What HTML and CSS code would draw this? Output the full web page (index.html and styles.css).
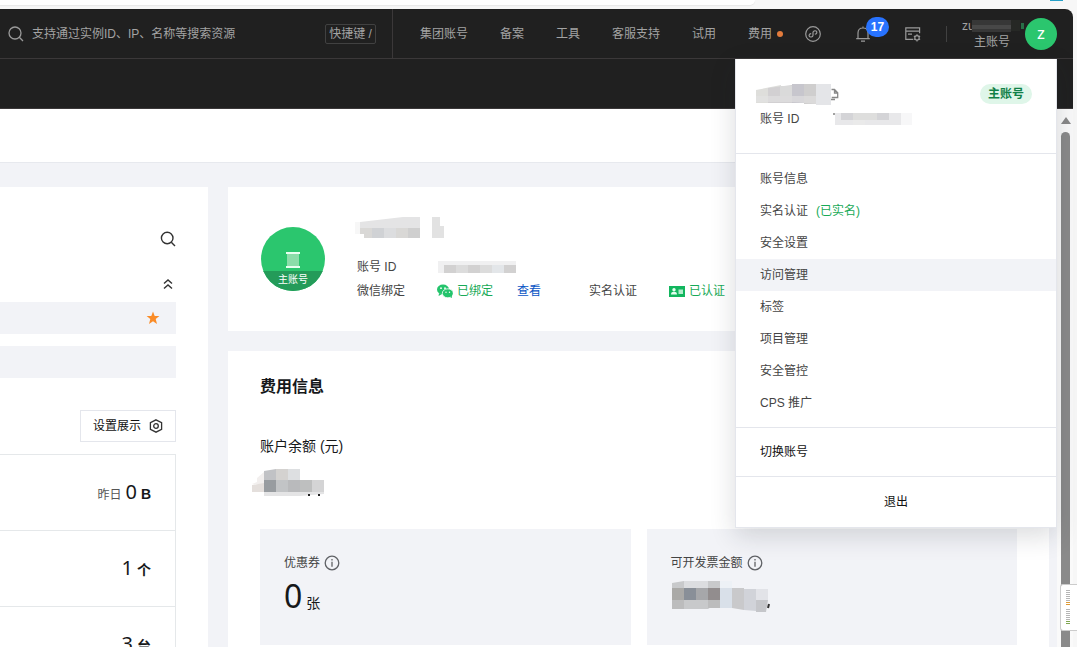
FILE: index.html
```html
<!DOCTYPE html>
<html lang="zh-CN">
<head>
<meta charset="utf-8">
<title>账号信息</title>
<link rel="stylesheet" href="styles.css">
</head>
<body>
<div class="window">
  <div class="tabstrip"><div class="omnibox"></div><div class="extension"></div></div>
  <div class="app">
    <header class="header">
      <div class="search">
        <svg class="icon" viewBox="0 0 16 16" fill="none" stroke="#9a9a9a" stroke-width="1.3"><circle cx="7" cy="7" r="6"/><path d="M11.3 11.3 15 15"/></svg>
        <input class="search-input" type="text" aria-label="搜索资源" placeholder="支持通过实例ID、IP、名称等搜索资源">
        <kbd class="shortcut">快捷键 /</kbd>
      </div>
      <nav class="nav">
        <a href="#">集团账号</a>
        <a href="#">备案</a>
        <a href="#">工具</a>
        <a href="#">客服支持</a>
        <a href="#">试用</a>
        <a href="#" class="fee">费用<i class="dot"></i></a>
      </nav>
      <div class="tools">
        <button class="tool" aria-label="小程序"><svg class="icon" viewBox="0 0 16 16" fill="none" stroke="#9a9a9a" stroke-width="1.2"><circle cx="8" cy="8" r="7.3"/><path d="M6.2 7.6C4.4 7.8 3.8 9 4.2 10c.6 1.5 3.6 1.3 3.8-.6V6.4c.2-1.9 3-2.2 3.7-.6.4 1.1-.2 2.2-1.9 2.4"/></svg></button>
        <button class="tool" aria-label="消息"><svg class="icon" viewBox="0 0 16 16" fill="none" stroke="#9a9a9a" stroke-width="1.2"><path d="M1.2 12.6h13.6M3 12.4V7c0-3 2-5 5-5s5 2 5 5v5.4M8 2V.6M6 15.1h4"/></svg><span class="count">17</span></button>
        <button class="tool" aria-label="控制台"><svg class="icon" viewBox="0 0 16 16" fill="none" stroke="#9a9a9a" stroke-width="1.2"><path d="M8.2 13.4H.8V1.8h13.8v5.4M.8 5.2h13.8M3 8.2h4"/><circle cx="12" cy="11.8" r="2.2"/><path d="M12 8.2v1.4M12 14v1.4M8.9 10l1.2.7M13.9 12.9l1.2.7M8.9 13.6l1.2-.7M13.9 10.7l1.2-.7"/></svg></button>
      </div>
      <div class="user">
        <div class="user-text">
          <span class="user-name">zu<svg class="user-mask" width="53" height="14" viewBox="0 0 53 14"><path d="M0 2h39v12H0z" fill="#373737"/><path d="M0 7h39v4H0z" fill="#484848"/><path d="M39 2h9v11h-9z" fill="#262825"/><path d="M49 5h3v6h-3z" fill="#286f47"/></svg></span>
          <span>主账号</span>
        </div>
        <div class="avatar">z</div>
      </div>
      <section class="menu">
        <div class="menu-head">
          <div class="menu-title">
            <svg width="83" height="22" viewBox="0 0 83 22"><path d="M75.5 5.500h3l3.200 3.200v4.800h-6M78.500 5.500v3.500h3M75 15.500h4" fill="none" stroke="#888" stroke-width="1.300"/><path d="M0 6 25 1v18L0 19z" fill="#dededb"/><path d="M12 4 36 1v18H12z" fill="#d2d0d2"/><path d="M24 2h12v10H24z" fill="#dadada"/><path d="M36 0h12v19H36z" fill="#c7c6cd"/><path d="M48 0h12v20H48z" fill="#cfcece"/><path d="M60 0h15v21H60z" fill="#e4e5e8"/><path d="M0 12h60v8L36 18H0z" fill="#e2e2e2" opacity=".6"/></svg>
            <span class="tag">主账号</span>
          </div>
          <div class="menu-id"><span>账号 ID</span><svg width="80" height="12" viewBox="0 0 80 12"><path d="M0 1h2" stroke="#444"/><path d="M2 0h66v12H2z" fill="#e8e8ea"/><path d="M8 0h12v7H8zM44 0h12v7H44z" fill="#d4d4d7"/><path d="M20 0h24v7H20z" fill="#dededd"/><path d="M20 7h12v5H20z" fill="#eaeaea"/><path d="M68 0h11v12H68z" fill="#f7f7f8"/></svg></div>
        </div>
        <div class="menu-list">
          <a href="#">账号信息</a>
          <a href="#">实名认证<span class="verified">(已实名)</span></a>
          <a href="#">安全设置</a>
          <a href="#" class="active">访问管理</a>
          <a href="#">标签</a>
          <a href="#">项目管理</a>
          <a href="#">安全管控</a>
          <a href="#">CPS 推广</a>
        </div>
        <button class="menu-switch">切换账号</button>
        <button class="menu-exit">退出</button>
      </section>
    </header>
    <div class="subbar"></div>
    <div class="viewport">
      <div class="page">
        <div class="titlebar"></div>
        <div class="columns">
          <aside class="side">
            <button class="plain" aria-label="搜索"><svg class="icon" viewBox="0 0 16 16" fill="none" stroke="#333" stroke-width="1.400"><circle cx="7.200" cy="7" r="5.800"/><path d="M11.300 11.200 15 15"/></svg></button>
            <button class="plain collapse" aria-label="收起"><svg class="icon" viewBox="0 0 16 16" fill="none" stroke="#333" stroke-width="1.400"><path d="M4 7.500 8 4l4 3.500M4 12.500 8 9l4 3.500"/></svg></button>
            <div class="bar"><svg width="14" height="14" viewBox="0 0 14 14"><path d="m7 .6 1.700 4.500h4.700L9.700 8l1.300 5L7 10.200 3 13l1.300-5L.6 5.100h4.700z" fill="#fa8c28"/></svg></div>
            <div class="bar"></div>
            <button class="settings">设置展示<svg width="14" height="14" viewBox="0 0 14 14" fill="none" stroke="#333" stroke-width="1.300"><path d="m7 .8 5.600 2.900v6.600L7 13.200l-5.600-2.900V3.700z"/><circle cx="7" cy="7" r="2.300"/></svg></button>
            <ul class="stats">
              <li><small>昨日</small><span>0</span><b>B</b></li>
              <li><span>1</span><b>个</b></li>
              <li><span>3</span><b>台</b></li>
            </ul>
          </aside>
          <main class="main">
            <section class="card account">
              <div class="portrait">
                <svg width="20" height="17" viewBox="0 0 20 17"><path d="M4 2h12v12H4z" fill="#8bdda9"/><path d="M3 1h14M3 15h14" stroke="#e8fff0" stroke-width="2"/></svg>
                <span>主账号</span>
              </div>
              <div class="details">
                <svg class="name-mask" width="89" height="22" viewBox="0 0 89 22"><path d="M0 5 5 5 48 0h17v21H9v-4H0z" fill="#e4e4e5"/><path d="M5 11h12v10H9v-4H5zM41 11h12v10H41z" fill="#d9d8d6"/><path d="M17 11h12v10H17z" fill="#d0d2d5"/><path d="M29 11h12v10H29z" fill="#dcdddf"/><path d="M53 11h12v10H53z" fill="#cfcfcf"/><path d="M77 0h8v9h4v12H77z" fill="#e2e2e2"/><path d="M0 5h5v12H0z" fill="#f7f7f7"/></svg>
                <div class="facts">
                  <span>账号 ID</span>
                  <svg class="id-mask" width="80" height="12" viewBox="0 0 80 12"><path d="M1 0h78v12H1z" fill="#f0f0f1"/><path d="M7 4h12v8H7zM31 4h12v8H31zM67 4h12v8H67z" fill="#d2d1d1"/><path d="M19 4h12v8H19zM43 4h12v8H43z" fill="#dcdcdc"/><path d="M55 4h12v8H55z" fill="#e3e6e9"/></svg>
                  <span class="fact-label">微信绑定</span>
                  <span class="ok"><svg class="icon" viewBox="0 0 16 16"><ellipse cx="6" cy="6.500" rx="6" ry="5" fill="#24c46c"/><path d="m2 10-.4 3 3-1.800z" fill="#24c46c"/><ellipse cx="10.800" cy="10.300" rx="5.500" ry="4.500" fill="#24c46c" stroke="#fff" stroke-width=".8"/><path d="m13 14 2 1-.3-2.500z" fill="#24c46c"/><g fill="#fff"><circle cx="4" cy="5.200" r=".9"/><circle cx="8" cy="5.200" r=".9"/><circle cx="9" cy="9.200" r=".7"/><circle cx="12.500" cy="9.200" r=".7"/></g></svg>已绑定</span>
                  <a class="link" href="#">查看</a>
                  <span class="fact-label">实名认证</span>
                  <span class="ok"><svg class="icon" viewBox="0 0 16 16"><path d="M0 3h16v11H0z" fill="#12b65e"/><g fill="#e5fff0"><circle cx="5" cy="6.700" r="1.700"/><path d="M2 11.500c0-2 1.200-2.700 3-2.700s3 .7 3 2.700z"/><path d="M9.500 6.500H14V11H9.500z" opacity=".75"/></g></svg>已认证</span>
                </div>
              </div>
            </section>
            <section class="card fees">
              <h2>费用信息</h2>
              <h3>账户余额 (元)</h3>
              <svg class="balance-mask" width="73" height="28" viewBox="0 0 73 28"><path d="M5 9 12 3v12H0l5-2z" fill="#f2efee"/><path d="M12 2 24 0v11H12z" fill="#c1c2c5"/><path d="M24 0h12v11H24z" fill="#d4d2d0"/><path d="M36 0h12v11H36z" fill="#dddfe1"/><path d="M0 16 12 14v9H0z" fill="#e4dfdc"/><path d="M12 11h12v12H12z" fill="#989ca0"/><path d="M24 11h12v12H24z" fill="#c2c4c6"/><path d="M36 11h12v12H36z" fill="#b9babc"/><path d="M48 11h12v12H48z" fill="#bebfbf"/><path d="M60 11h12v12H60z" fill="#d4d4d5"/><path d="M12 23h60v2l-24 2H12z" fill="#e4e4e5"/><path d="M56 26h2M66 26h2" stroke="#222" stroke-width="2"/></svg>
              <div class="boxes">
                <div class="box">
                  <div class="box-label">优惠券<svg class="icon" viewBox="0 0 16 16" fill="none" stroke="#606266" stroke-width="1.300"><circle cx="8" cy="8" r="6.800"/><path d="M8 6.800v5M8 4v1.500"/></svg></div>
                  <div class="box-value">0<small>张</small></div>
                </div>
                <div class="box">
                  <div class="box-label">可开发票金额<svg class="icon" viewBox="0 0 16 16" fill="none" stroke="#606266" stroke-width="1.300"><circle cx="8" cy="8" r="6.800"/><path d="M8 6.800v5M8 4v1.500"/></svg></div>
                  <svg class="invoice-mask" width="101" height="32" viewBox="0 0 101 32"><path d="M1 2 13 0h36v20l-12 8H1z" fill="#c8c9cb"/><path d="M13 0h24v7H13z" fill="#dcdde0"/><path d="M1 7h12v12H1z" fill="#aaa9a7"/><path d="M13 7h12v12H13z" fill="#898f98"/><path d="M25 7h12v12H25z" fill="#a6a7aa"/><path d="M37 7h12v12H37z" fill="#928d8e"/><path d="M1 19h12v9H1zM37 19h12v8H37z" fill="#bcbcbd"/><path d="M49 0h12v7H49z" fill="#edf1f6"/><path d="M49 7h12v20H49z" fill="#d9e0e9"/><path d="M61 7h12v22l-12-2z" fill="#c9c9cb"/><path d="M73 8h12v22l-12-1z" fill="#d1d3d9"/><path d="M85 8h12v11H85z" fill="#e2e3e8"/><path d="M85 19h12l-2 12H85z" fill="#c5c6ca"/><path d="m98 23-1 4" stroke="#333" stroke-width="2"/></svg>
                </div>
              </div>
            </section>
          </main>
        </div>
      </div>
      <div class="scrollbar"><div class="arrow"></div><div class="thumb"></div></div>
    </div>
    <div class="meter">
      <svg width="4" height="36" viewBox="0 0 4 36"><path d="M0 .5h4M0 2.500h4M0 4.500h4M0 6.500h4M0 8.500h4M0 10.500h4M0 19.500h4M0 21.500h4M0 23.500h4M0 25.500h4M0 27.500h4M0 29.500h4" stroke="#b5b5b5"/><path d="M0 12.500h4M0 14.500h4" stroke="#dd9a35"/><path d="M0 31.500h4M0 33.500h4" stroke="#7fa650"/></svg>
    </div>
  </div>
</div>
</body>
</html>
```

FILE: styles.css
```css
* { box-sizing: border-box; }
body {
  margin: 0;
  font: 12px/20px "Liberation Sans", "Noto Sans CJK SC", sans-serif;
  color: #444;
  background: #f7f7f7;
}
button, input, kbd { font: inherit; color: inherit; }
button { padding: 0; border: 0; background: none; }
a { color: inherit; text-decoration: none; }
svg { display: block; flex: none; }
.icon { width: 16px; height: 16px; }

.window { display: flex; flex-direction: column; height: 100vh; overflow: hidden; }
.tabstrip { flex: none; height: 9px; display: flex; justify-content: space-between; padding-right: 14px; }
.omnibox { width: 71%; height: 5px; background: #fff; border-bottom-right-radius: 8px; box-shadow: 0 1px 1px #e8e8e8; }
.extension { width: 13px; height: 1px; background: #26a0c8; }
.app { position: relative; flex: 1; min-height: 0; margin-right: 4px; display: flex; flex-direction: column; }

.header {
  position: relative; z-index: 2; flex: none; height: 50px;
  display: flex; align-items: stretch;
  background: #202020; border-bottom: 1px solid #3b3839; border-top-right-radius: 8px;
  color: #a3a3a3;
}
.search { flex: 1; display: flex; align-items: center; padding: 0 16px 0 8px; border-right: 1px solid #3b3839; }
.search-input { flex: 1; min-width: 0; margin-left: 8px; padding: 0; border: 0; outline: 0; background: none; }
.search-input::placeholder { color: #a3a3a3; opacity: 1; }
.shortcut { height: 20px; line-height: 18px; padding: 0 3px; border: 1px solid #414141; border-radius: 2px; }
.nav { display: flex; align-items: center; gap: 32px; padding-left: 27px; }
.fee { display: flex; align-items: center; gap: 5px; }
.dot { width: 6px; height: 6px; border-radius: 50%; background: #e37b3c; }
.tools { display: flex; align-items: center; gap: 34px; padding: 0 25px 0 22px; }
.tool { position: relative; }
.count {
  position: absolute; left: 11px; top: -9px; width: 23px; height: 20px;
  border-radius: 10px; background: #2873ff; color: #fff; font-weight: bold; line-height: 20px; text-align: center;
}
.user { display: flex; align-items: center; gap: 15px; padding-right: 16px; }
.user::before { content: ""; width: 1px; height: 16px; background: #414141; }
.user-text { display: flex; flex-direction: column; align-items: flex-end; line-height: 16px; }
.user-name { position: relative; width: 48px; }
.user-mask { position: absolute; left: 10px; top: 0; }
.avatar { width: 32px; height: 32px; border-radius: 50%; background: #2bc66e; color: #fff; font-size: 16px; line-height: 32px; text-align: center; }

.menu {
  position: absolute; top: 50px; right: 16px; width: 322px;
  background: #fff; border: 1px solid #e4e6ec; border-top: 0; color: #444;
  box-shadow: 0 8px 24px rgba(30, 35, 50, .16);
}
.menu-head { height: 95px; padding: 25px 24px 0 20px; border-bottom: 1px solid #e4e6ec; }
.menu-title { display: flex; justify-content: space-between; height: 25px; }
.tag { height: 20px; padding: 0 8px; border-radius: 10px; background: #dff6e9; color: #108047; font-weight: bold; }
.menu-id { display: flex; align-items: center; gap: 34px; padding-left: 4px; }
.menu-list { padding: 9px 0 8px; border-bottom: 1px solid #e4e6ec; }
.menu-list a { display: flex; height: 32px; line-height: 32px; padding: 0 24px; }
.menu-list .active { background: #f2f3f7; }
.verified { margin-left: 8px; color: #18aa57; }
.menu-switch { display: block; width: 100%; height: 49px; padding: 0 24px; text-align: left; border-bottom: 1px solid #e4e6ec; color: #111; }
.menu-exit { display: block; width: 100%; height: 50px; color: #111; }

.subbar { flex: none; height: 50px; background: #202020; border-bottom: 1px solid #3b3839; }
.viewport { flex: 1; min-height: 0; display: flex; }
.page { flex: 1; min-width: 0; overflow: hidden; background: #f2f3f7; }
.titlebar { height: 54px; background: #fff; border-bottom: 1px solid #e7e9ee; }
.columns { display: flex; gap: 20px; padding: 24px 8px 0 0; }

.side { flex: none; width: 208px; min-height: 520px; background: #fff; padding: 44px 32px 0 0; display: flex; flex-direction: column; align-items: flex-end; }
.collapse { margin: 29px 0 10px; }
.bar { width: 100%; height: 32px; margin-bottom: 12px; padding-right: 16px; background: #f2f3f7; display: flex; align-items: center; justify-content: flex-end; }
.settings { display: flex; align-items: center; gap: 8px; height: 32px; margin: 20px 0 12px; padding: 0 12px; border: 1px solid #e4e6ec; color: #111; }
.stats { width: 100%; margin: 0; padding: 0; list-style: none; border: 1px solid #e5e8ea; border-width: 1px 1px 0 0; }
.stats li { display: flex; align-items: baseline; justify-content: flex-end; height: 76px; padding: 22px 24px 0 0; border-bottom: 1px solid #e5e8ea; color: #16181a; }
.stats small { font-size: 12px; margin-right: 4px; color: #555; }
.stats span { font: 20px/30px "Noto Sans", sans-serif; }
.stats b { margin-left: 4px; font-size: 14px; }

.main { flex: 1; min-width: 0; display: flex; flex-direction: column; gap: 20px; }
.card { background: #fff; padding: 30px 32px; }
.account { display: flex; gap: 30px; height: 144px; }
.portrait { width: 64px; height: 64px; margin: 10px 0 0 1px; border-radius: 50%; overflow: hidden; background: #2bc66e; display: flex; flex-direction: column; align-items: center; justify-content: flex-end; }
.portrait span { width: 100%; margin-top: 2px; background: #249b59; color: #fff; font-size: 10px; line-height: 18px; height: 20px; text-align: center; }
.facts { display: grid; grid-template-columns: 80px 80px 72px 80px auto; grid-auto-rows: 24px; align-items: center; margin-top: 16px; padding-left: 2px; justify-content: start; }
.id-mask { grid-column: 2 / 6; }
.fact-label { white-space: nowrap; }
.ok { display: flex; align-items: center; gap: 4px; color: #18aa57; white-space: nowrap; }
.link { color: #0a55c4; }
.fees { padding-top: 24px; min-height: 360px; }
.fees h2 { margin: 0; font-size: 16px; line-height: 24px; color: #16181a; }
.fees h3 { margin: 35px 0 0; font-size: 14px; line-height: 24px; font-weight: normal; color: #16181a; }
.balance-mask { margin: 11px 0 32px -8px; }
.boxes { display: grid; grid-template-columns: 1fr 1fr; gap: 16px; }
.box { height: 116px; padding: 24px; background: #f2f3f7; }
.box-label { display: flex; align-items: center; gap: 4px; }
.box-value { font: 32px/46px "Noto Sans", "Noto Sans CJK SC", sans-serif; color: #16181a; }
.box-value small { margin-left: 4px; font-size: 14px; }
.invoice-mask { margin-top: 8px; }

.scrollbar { flex: none; width: 16px; background: #fafafa; display: flex; flex-direction: column; align-items: center; padding: 8px 0 0 1px; }
.arrow { border: 5px solid transparent; border-top: 0; border-bottom: 7px solid #888; }
.thumb { flex: 1; width: 9px; margin-top: 8px; border-radius: 5px 5px 0 0; background: #8a8a8a; }
.meter { position: absolute; z-index: 3; right: -4px; bottom: 16px; width: 17px; height: 47px; padding: 5px; background: #fff; border: 1px solid #ccc; border-right: 0; border-radius: 3px 0 0 3px; }
```
